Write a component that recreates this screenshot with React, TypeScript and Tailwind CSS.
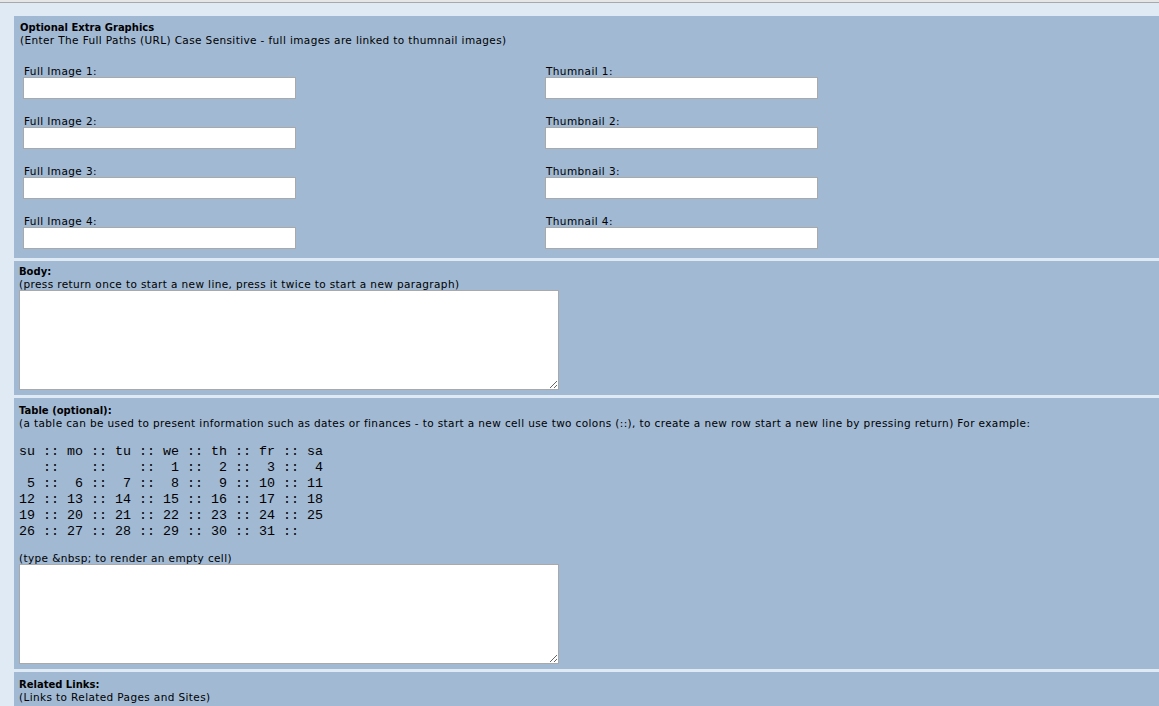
import React from 'react';

const calendar = [
  'su :: mo :: tu :: we :: th :: fr :: sa',
  '   ::    ::    ::  1 ::  2 ::  3 ::  4',
  ' 5 ::  6 ::  7 ::  8 ::  9 :: 10 :: 11',
  '12 :: 13 :: 14 :: 15 :: 16 :: 17 :: 18',
  '19 :: 20 :: 21 :: 22 :: 23 :: 24 :: 25',
  '26 :: 27 :: 28 :: 29 :: 30 :: 31 ::',
].join('\n');

const thumbs = ['Thumnail 1:', 'Thumbnail 2:', 'Thumbnail 3:', 'Thumnail 4:'];

const Field: React.FC<{ label: string }> = ({ label }) => (
  <div className="flex flex-col">
    <label className="block h-[12px] leading-[12px] pl-[1px] text-[10.5px] tracking-[0.4px]">{label}</label>
    <input
      type="text"
      className="block w-[273px] h-[22px] bg-white border border-[#a9a9a9] outline-none"
    />
  </div>
);

const Note: React.FC<{ children: React.ReactNode; className?: string }> = ({ children, className = '' }) => (
  <div className={`text-[10.5px] tracking-[0.38px] leading-[12px] ${className}`}>{children}</div>
);

export default function App() {
  return (
    <div
      className="min-h-screen bg-[#dfeaf5] text-black text-[10px] leading-[12px]"
      style={{ fontFamily: '"DejaVu Sans", Verdana, sans-serif' }}
    >
      <div className="h-[2px] bg-[#e6e6e6]" />
      <div className="h-[1px] bg-[#a9a9a9]" />

      <div className="pl-[14px] pt-[13px] flex flex-col gap-[3px]">
        {/* extra graphics */}
        <section className="bg-[#a1b9d3] pl-[6px] pt-[6px] pb-[9px]">
          <div className="font-bold">Optional Extra Graphics</div>
          <Note>(Enter The Full Paths (URL) Case Sensitive - full images are linked to thumnail images)</Note>
          <div className="mt-[19px] pl-[3px] grid grid-cols-[522px_273px] gap-y-[16px]">
            {thumbs.map((t, i) => (
              <React.Fragment key={t}>
                <Field label={`Full Image ${i + 1}:`} />
                <Field label={t} />
              </React.Fragment>
            ))}
          </div>
        </section>

        {/* body */}
        <section className="bg-[#a1b9d3] pl-[5px] pt-[5px] pb-[5px]">
          <div className="font-bold">Body:</div>
          <Note>(press return once to start a new line, press it twice to start a new paragraph)</Note>
          <textarea className="block w-[540px] h-[100px] bg-white border border-[#a9a9a9] outline-none" />
        </section>

        {/* table */}
        <section className="bg-[#a1b9d3] pl-[5px] pt-[7px] pb-[5px]">
          <div className="font-bold">Table (optional):</div>
          <Note>
            (a table can be used to present information such as dates or finances - to start a new cell use two colons (::), to create a new row start a new line by pressing return) For example:
          </Note>
          <pre
            className="mt-[15px] text-[13.333px] leading-[16px] whitespace-pre"
            style={{ fontFamily: '"Liberation Mono", "Courier New", monospace' }}
          >
            {calendar}
          </pre>
          <Note className="mt-[12px]">(type &amp;nbsp; to render an empty cell)</Note>
          <textarea className="block w-[540px] h-[100px] bg-white border border-[#a9a9a9] outline-none" />
        </section>

        {/* related links */}
        <section className="bg-[#a1b9d3] pl-[5px] pt-[7px] pb-[10px]">
          <div className="font-bold">Related Links:</div>
          <Note>(Links to Related Pages and Sites)</Note>
        </section>
      </div>
    </div>
  );
}
